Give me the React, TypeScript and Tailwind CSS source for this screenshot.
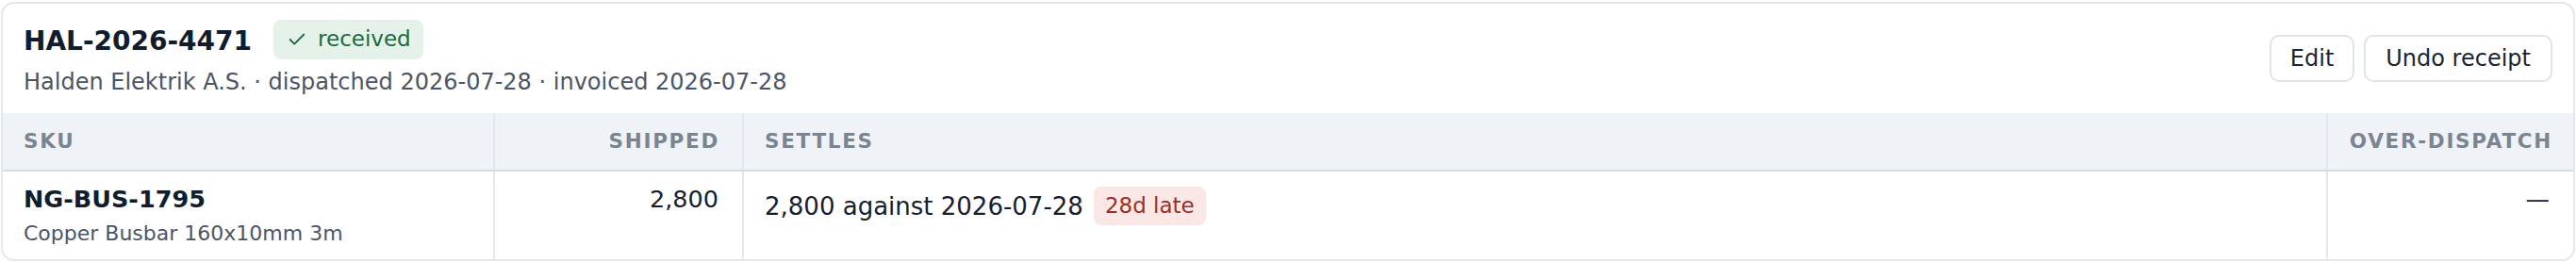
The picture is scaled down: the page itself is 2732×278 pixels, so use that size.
export default function App() {
  return (
    <div className="w-[2732px] h-[278px] bg-white pt-[2px] pl-[1px] font-['DejaVu_Sans',sans-serif]">
      {/* Card */}
      <div className="w-[2730px] h-[275px] flex flex-col overflow-hidden rounded-[14px] border-2 border-[#e2e8f0] bg-white">
        {/* Header */}
        <div className="h-[116px] flex items-center justify-between pl-[22px] pr-[22px]">
          <div>
            <div className="flex items-start gap-[23px]">
              <h1 className="mt-[6px] text-[28px] leading-[34px] font-bold text-[#111c2d]">HAL-2026-4471</h1>
              <span className="h-[42px] flex items-center gap-[11px] rounded-[8px] bg-[#e5f2e9] pl-[14px] pr-[13px] text-[23px] text-[#1c6b3e]">
                <svg width="22" height="22" viewBox="0 0 24 24" fill="none" stroke="currentColor" strokeWidth="2" strokeLinecap="round" strokeLinejoin="round">
                  <path d="M20 6 9 17l-5-5" />
                </svg>
                received
              </span>
            </div>
            <p className="mt-[7px] text-[24px] leading-[34px] text-[#4b5565]">
              Halden Elektrik A.S. · dispatched 2026-07-28 · invoiced 2026-07-28
            </p>
          </div>
          <div className="flex items-center gap-[10px]">
            <button className="h-[50px] rounded-[10px] border-2 border-[#dfe4ea] bg-white px-[20px] text-[24px] text-[#1a2535]">Edit</button>
            <button className="h-[50px] rounded-[10px] border-2 border-[#dfe4ea] bg-white px-[21px] text-[24px] text-[#1a2535]">Undo receipt</button>
          </div>
        </div>

        {/* Table head */}
        <div className="grid h-[62px] grid-cols-[520px_264px_1fr_262px] border-b-2 border-[#d3dce5] bg-[#eff3f7] text-[21.5px] font-bold uppercase tracking-[1.7px] text-[#7a8592]">
          <div className="flex items-center pl-[22px]">SKU</div>
          <div className="flex items-center justify-end border-l-2 border-[#e2e8f0] pr-[24px]">Shipped</div>
          <div className="flex items-center border-l-2 border-[#e2e8f0] pl-[22px]">Settles</div>
          <div className="flex items-center justify-end border-l-2 border-[#e2e8f0] pr-[22px]">Over-dispatch</div>
        </div>

        {/* Row */}
        <div className="grid flex-1 grid-cols-[520px_264px_1fr_262px] text-[25.5px] text-[#16202e]">
          <div className="pl-[22px] pt-[16px]">
            <div className="font-bold leading-[26px] text-[#111c2d]">NG-BUS-1795</div>
            <div className="mt-[9px] text-[22px] leading-[30px] text-[#4b5565]">Copper Busbar 160x10mm 3m</div>
          </div>
          <div className="border-l-2 border-[#e2e8f0] pr-[25px] pt-[16px] text-right leading-[26px]">2,800</div>
          <div className="border-l-2 border-[#e2e8f0] pl-[22px] pt-[16px]">
            <div className="flex items-center gap-[11px]">
              <span className="text-[26px] leading-[26px]">2,800 against 2026-07-28</span>
              <span className="h-[41px] flex items-center rounded-[8px] bg-[#fbe8e6] px-[12px] text-[23px] text-[#9d2f25]">28d late</span>
            </div>
          </div>
          <div className="border-l-2 border-[#e2e8f0] pr-[25px] pt-[16px] text-right leading-[26px]">—</div>
        </div>
      </div>
    </div>
  );
}
